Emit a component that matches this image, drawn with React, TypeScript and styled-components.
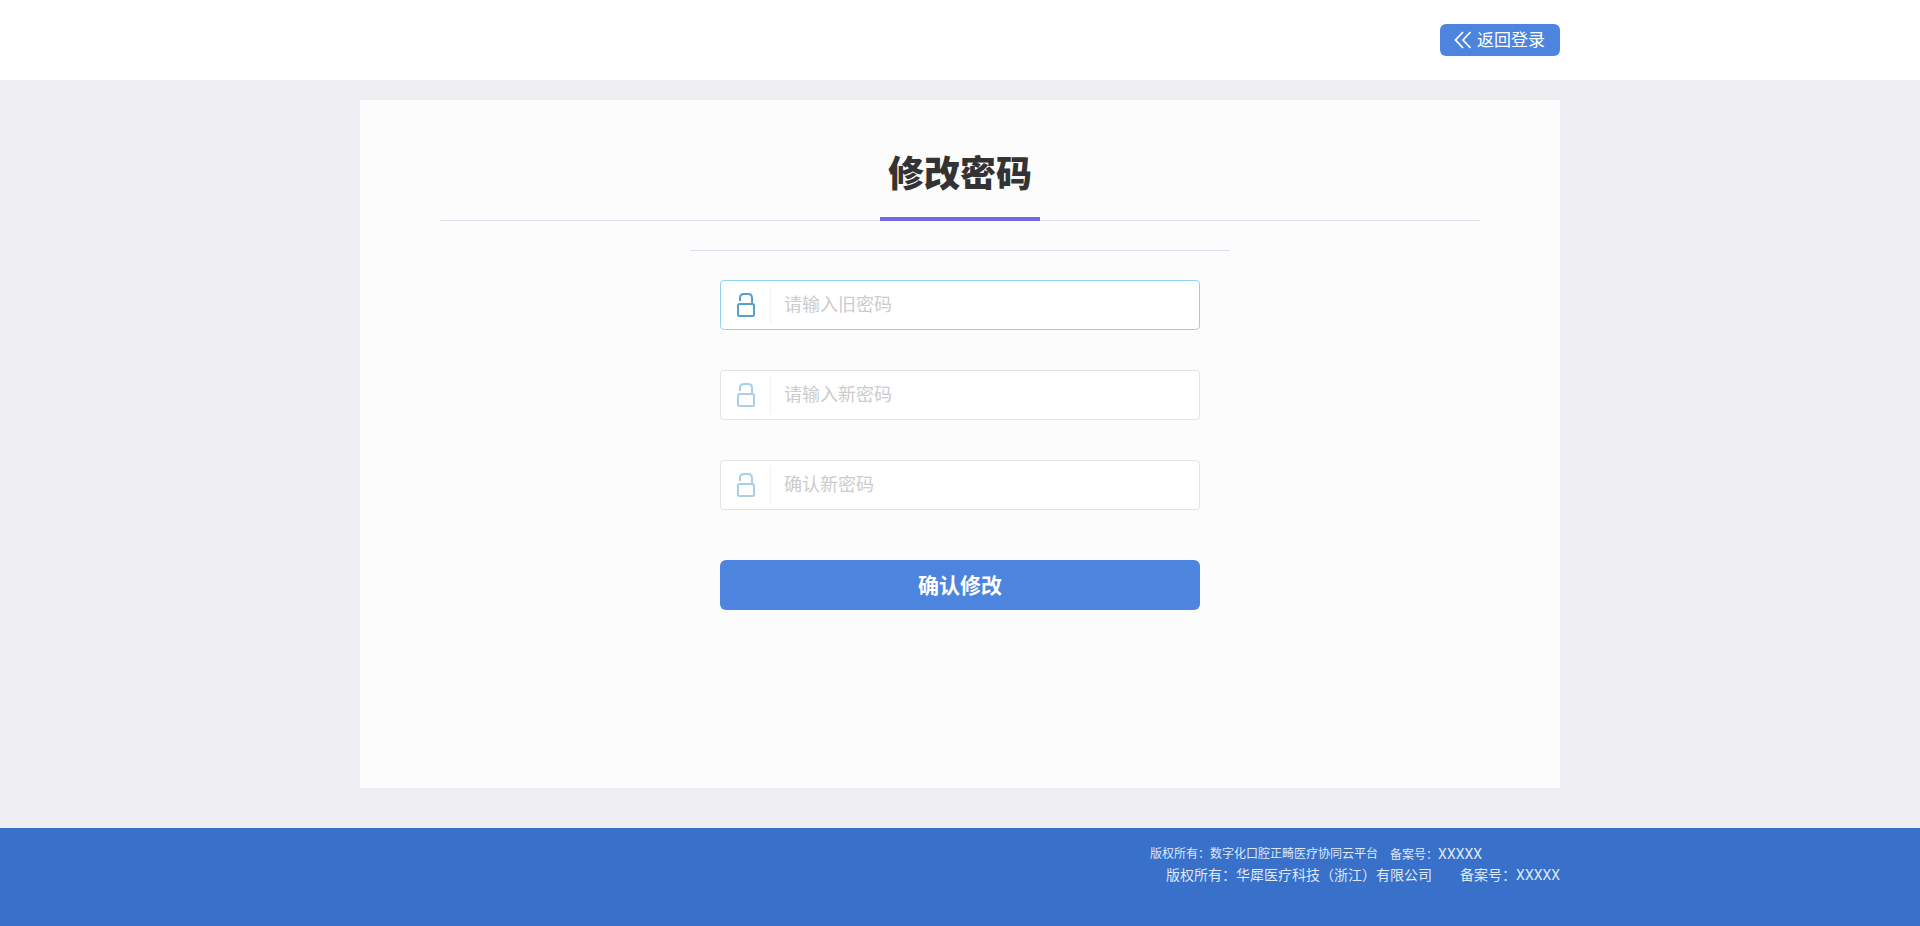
import React from 'react';
import styled, { createGlobalStyle } from 'styled-components';

const GlobalStyle = createGlobalStyle`
  * { box-sizing: border-box; }
  html, body, #root { min-height: 100vh; }
  body {
    margin: 0;
    background: #eeeef3;
    color: #333;
    font-family: "Noto Sans", "Noto Sans CJK SC", sans-serif;
  }
  #root { display: flex; flex-direction: column; }
`;

const Header = styled.header`
  background: #fff;
  height: 80px;
  display: flex;
  align-items: center;
`;

const Container = styled.div`
  width: 100%;
  max-width: 1200px;
  margin: 0 auto;
  display: flex;
  flex-direction: column;
  align-items: flex-end;
`;

const BackLink = styled.a`
  display: flex;
  align-items: center;
  gap: 5px;
  width: 120px;
  height: 32px;
  padding-left: 14px;
  border-radius: 6px;
  background: #4c84de;
  color: #fff;
  font-size: 17px;
  line-height: 32px;
  text-decoration: none;
`;

const Main = styled.main`
  flex: 1;
  display: flex;
  justify-content: center;
  padding: 20px 0 40px;
`;

const Card = styled.section`
  width: 100%;
  max-width: 1200px;
  padding: 40px 80px;
  background: #fcfcfc;
`;

const TitleBar = styled.div`
  display: flex;
  justify-content: center;
  border-bottom: 1px solid #e0dff2;
`;

const Title = styled.h1`
  width: 160px;
  height: 81px;
  margin: 0 0 -1px;
  border-bottom: 4px solid #7468de;
  font-size: 36px;
  font-weight: 900;
  line-height: 68px;
  text-align: center;
`;

const Form = styled.form`
  max-width: 540px;
  margin: 29px auto 0;
  padding: 29px 30px 0;
  border-top: 1px solid #e0dff2;
`;

const Field = styled.label<{ $active?: boolean }>`
  display: flex;
  align-items: center;
  height: 50px;
  margin-bottom: 40px;
  border: 1px solid ${p => (p.$active ? '#94d0f5' : '#e2e2e2')};
  border-radius: 4px;
  background: #fff;
  color: ${p => (p.$active ? '#559fd2' : '#a9cfe8')};
`;

const IconCell = styled.span`
  display: flex;
  align-items: center;
  justify-content: center;
  width: 50px;
  height: 38px;
  border-right: 1px solid #f2f2f2;
`;

const Input = styled.input`
  flex: 1;
  min-width: 0;
  height: 48px;
  padding: 0 13px 2px;
  border: 0;
  outline: 0;
  background: transparent;
  color: #333;
  font-family: inherit;
  font-size: 18px;
  &::placeholder { color: #ccc; opacity: 1; }
`;

const Submit = styled.button`
  display: block;
  width: 100%;
  height: 50px;
  margin-top: 50px;
  padding: 0 0 2px;
  border: 0;
  border-radius: 6px;
  background: #4c84de;
  color: #fff;
  font-family: inherit;
  font-size: 21px;
  font-weight: 700;
`;

const Footer = styled.footer`
  min-height: 98px;
  padding: 16px 0;
  background: #3870ca;
  color: #dfe8f6;
  font-family: Roboto, "Noto Sans CJK SC", sans-serif;
`;

const Platform = styled.p`
  display: flex;
  gap: 12px;
  margin: 0;
  padding-right: 78px;
  font-size: 12px;
  line-height: 20px;
`;

const Company = styled.p`
  display: flex;
  gap: 28px;
  margin: 0;
  font-size: 14px;
  line-height: 20px;
`;

const RecordNumber = styled.span`
  font-size: 14px;
`;

const BackIcon = () => (
  <svg width="18" height="18" viewBox="0 0 18 18" fill="none" stroke="currentColor" strokeWidth="1.8" aria-hidden="true">
    <path d="M9 1 1.500 9 9 17M16.500 1 9 9l7.500 8" />
  </svg>
);

const LockIcon = () => (
  <svg width="18" height="24" viewBox="0 0 18 24" fill="none" stroke="currentColor" strokeWidth="2" aria-hidden="true">
    <rect x="1" y="11" width="16" height="12" rx="1.500" />
    <path d="M3 8V5q0-4 4-4h4q4 0 4 4v6" />
  </svg>
);

const fields = [
  { name: 'old', hint: '请输入旧密码', active: true },
  { name: 'new', hint: '请输入新密码', active: false },
  { name: 'confirm', hint: '确认新密码', active: false },
];

export default function App() {
  return (
    <>
      <GlobalStyle />
      <Header>
        <Container>
          <BackLink href="#login"><BackIcon />返回登录</BackLink>
        </Container>
      </Header>
      <Main>
        <Card>
          <TitleBar><Title>修改密码</Title></TitleBar>
          <Form onSubmit={e => e.preventDefault()}>
            {fields.map(f => (
              <Field key={f.name} $active={f.active}>
                <IconCell><LockIcon /></IconCell>
                <Input type="password" name={f.name} placeholder={f.hint} aria-label={f.hint} />
              </Field>
            ))}
            <Submit type="submit">确认修改</Submit>
          </Form>
        </Card>
      </Main>
      <Footer>
        <Container>
          <Platform>
            <span>版权所有：数字化口腔正畸医疗协同云平台</span>
            <span>备案号：<RecordNumber>XXXXX</RecordNumber></span>
          </Platform>
          <Company>
            <span>版权所有：华犀医疗科技（浙江）有限公司</span>
            <span>备案号：<RecordNumber>XXXXX</RecordNumber></span>
          </Company>
        </Container>
      </Footer>
    </>
  );
}
